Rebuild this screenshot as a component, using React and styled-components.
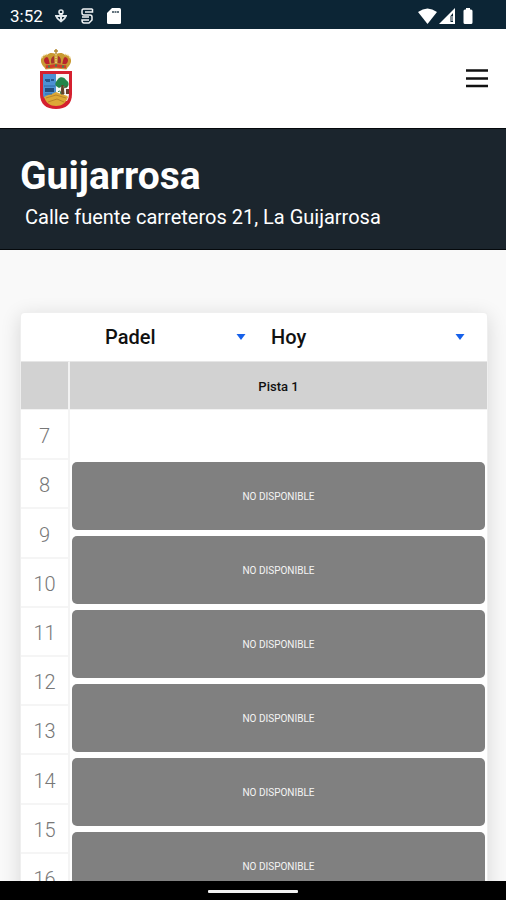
import React, { useState } from 'react';
import styled, { createGlobalStyle } from 'styled-components';

const GlobalStyle = createGlobalStyle`
  * {
    box-sizing: border-box;
  }

  body {
    margin: 0;
    background: #f9f9f9;
    font-family: Roboto, 'Liberation Sans', sans-serif;
    color: #111;
  }
`;

const Screen = styled.div`
  height: 100vh;
  display: flex;
  flex-direction: column;
  overflow: hidden;
`;

const StatusBar = styled.div`
  flex: none;
  height: 29px;
  padding: 2px 31px 0 10px;
  display: flex;
  align-items: center;
  justify-content: space-between;
  background: #0c2535;
  color: #fff;
`;

const StatusGroup = styled.div`
  display: flex;
  align-items: center;
  gap: ${({ $gap }) => $gap}px;
`;

const Clock = styled.span`
  font-size: 17px;
  line-height: 20px;
`;

const Header = styled.header`
  flex: none;
  height: 99px;
  padding: 0 18px 0 39px;
  display: flex;
  align-items: center;
  justify-content: space-between;
  background: #fff;
`;

const LogoLink = styled.a`
  display: flex;
`;

const MenuButton = styled.button`
  padding: 0;
  border: 0;
  background: none;
  display: flex;
`;

const Hero = styled.section`
  flex: none;
  padding: 24px 20px 19px;
  background: #1b252d;
  border-top: 1px solid #05090c;
  border-bottom: 1px solid #05090c;
  color: #fff;
`;

const Title = styled.h1`
  margin: 0;
  font-size: 39px;
  line-height: 46px;
  font-weight: 700;
`;

const Address = styled.p`
  margin: 5px 0 0 5px;
  font-size: 20px;
  line-height: 26px;
`;

const Content = styled.main`
  flex: 1;
  min-height: 0;
  overflow-y: auto;
  scrollbar-width: none;
  padding: 62px 18px 0 20px;
`;

const Card = styled.div`
  background: #fff;
  border: 1px solid #efefef;
  border-radius: 4px;
  box-shadow: 0 4px 20px rgba(0, 0, 0, 0.14);
`;

const Filters = styled.div`
  height: 48px;
  padding: 0 22px 0 84px;
  display: grid;
  grid-template-columns: 141fr 194fr;
  column-gap: 25px;
  align-items: center;
`;

const SelectBox = styled.div`
  display: grid;
  align-items: center;

  > * {
    grid-area: 1 / 1;
  }

  svg {
    justify-self: end;
    pointer-events: none;
  }
`;

const Select = styled.select`
  width: 100%;
  padding: 0;
  border: 0;
  background: none;
  appearance: none;
  font-family: inherit;
  font-size: 20px;
  font-weight: 500;
  line-height: 24px;
  color: #111;
`;

const Schedule = styled.div`
  display: grid;
  grid-template-columns: 49px 1fr;
`;

const HeadCell = styled.div`
  height: 49px;
  padding-top: 2px;
  display: flex;
  align-items: center;
  justify-content: center;
  background: #d2d2d2;
  border-bottom: 1px solid #f2f2f2;
  border-top: 1px solid #e6e6e6;
  border-right: ${({ $divided }) => ($divided ? '2px solid #f2f2f2' : '0')};
  font-size: 13px;
  font-weight: 500;
`;

const Hours = styled.ul`
  margin: 0;
  padding: 1px 0 0;
  list-style: none;
  display: flex;
  flex-direction: column;
  border-right: 2px solid #f4f4f4;
`;

const Hour = styled.li`
  flex: 1;
  padding-top: 3px;
  display: flex;
  align-items: center;
  justify-content: center;
  border-bottom: 2px solid #f5f5f5;
  font-size: 20px;
  font-weight: 300;
  line-height: 24px;
  color: #777;
`;

const Court = styled.div`
  padding: 0 2px 3px;
  display: flex;
  flex-direction: column;
  gap: 6px;
`;

const FreeSlot = styled.div`
  height: 46px;
`;

const Slot = styled.button`
  height: 68px;
  padding: 0;
  border: 0;
  border-radius: 5px;
  background: #808080;
  color: #f4f4f4;
  font-family: inherit;
  font-size: 10px;
  text-transform: uppercase;
`;

const NavBar = styled.div`
  flex: none;
  height: 19px;
  padding-top: 2px;
  display: flex;
  align-items: center;
  justify-content: center;
  background: #000;
`;

const NavHandle = styled.div`
  width: 90px;
  height: 3px;
  border-radius: 1px;
  background: #f2f2f2;
`;

function Arrow() {
  return (
    <svg width="10" height="6" viewBox="0 0 10 6" aria-hidden="true">
      <path d="M0.5 0H9.5L5 6Z" fill="#1660ea" />
    </svg>
  );
}

function Crest() {
  return (
    <svg width="34" height="62" viewBox="0 0 34 62" aria-hidden="true">
      {/* crown */}
      <path d="M6 20C-1 14 2 7 8 7C11 4 14 5 17 6C20 5 23 4 26 7C32 7 35 14 28 20Z" fill="#c99a32" />
      <path d="M8 17C4 14 4 10 8 9C10 10 10 13 11 17Z M26 17C30 14 30 10 26 9C24 10 24 13 23 17Z" fill="#b8242b" />
      <path d="M13 17C11 13 12 9 15 8L15.500 17Z M21 17C23 13 22 9 19 8L18.500 17Z" fill="#a83230" />
      <path d="M17 1V7M15 3H19" stroke="#b58a35" strokeWidth="1.500" />
      <path d="M3 10C4 7 7 6 9 7M31 10C30 7 27 6 25 7M17 6V16" fill="none" stroke="#ecd18a" strokeWidth="1.500" strokeDasharray="1.500 1" />
      <path d="M6 17Q17 14 28 17L27.500 21Q17 19 6.500 21Z" fill="#d23a2c" stroke="#c79a37" />
      <path d="M9 18.500H11M16 17.500H18M23 18.500H25" stroke="#3d8654" strokeWidth="2" />
      {/* shield */}
      <path d="M1 23H33V46C33 56 27 61 17 61C7 61 1 56 1 46Z" fill="#d5202f" />
      <path d="M4 26H17V50H5Q4 48 4 46Z" fill="#4d91d3" />
      <path d="M17 26H30V46Q30 50 28 53H17Z" fill="#f6f7f4" />
      <path d="M5 49C9 47 11 46 13 46L17 44L22 46C25 47 28 47 29 49C27 55 23 58 17 58C11 58 7 55 5 49Z" fill="#dda936" />
      <path d="M7 50L17 47L27 50M9 54L18 51L25 54" fill="none" stroke="#b98428" />
      <path d="M6 32H8V33H10V32H11M12 32H15" stroke="#24578e" strokeWidth="2" />
      <path d="M6 40H15V44H6Z" fill="#234d7c" />
      <path d="M5 38H16M6 46H13" stroke="#2f6aa5" />
      <path d="M17 38C15 35 18 33 19 31C21 28 26 29 27 32C31 34 30 39 27 40L24 38L20 40Z" fill="#23854a" />
      <path d="M23 37L22 46H25L24 37M25 40L28 38" fill="#654228" stroke="#654228" />
      <path d="M27 41H30V46H27Z" fill="#693d2e" />
      <path d="M19 44Q21 41 22 46" fill="none" stroke="#37834c" />
    </svg>
  );
}

const hours = [7, 8, 9, 10, 11, 12, 13, 14, 15, 16];
const slots = ['8:00', '9:30', '11:00', '12:30', '14:00', '15:30'];

export default function App() {
  const [sport, setSport] = useState('Padel');
  const [day, setDay] = useState('Hoy');

  return (
    <Screen>
      <GlobalStyle />
      <StatusBar>
        <StatusGroup $gap={12}>
          <Clock>3:52</Clock>
          <svg width="12" height="16" viewBox="0 0 12 16" aria-hidden="true">
            <circle cx="6" cy="4" r="2" fill="none" stroke="#dfe6ea" strokeWidth="1.600" />
            <path d="M4.500 5H7.500V8H4.500Z" fill="#fff" />
            <path d="M1 8H11Q10 11 6 13.500Q2 11 1 8Z" fill="none" stroke="#dfe6ea" strokeWidth="1.800" />
            <path d="M6 6V13" stroke="#dfe6ea" strokeWidth="2" />
          </svg>
          <svg width="16" height="16" viewBox="0 0 14 16" aria-hidden="true">
            <path
              d="M12.500 1H3.500Q2 1 2 3V5Q2 7 4 7H10M5 4H12.500V1M2 9H9M10 7Q12 7 12 9V12L9 15H4Q2 15 2 12H9"
              fill="none"
              stroke="#f1f4f5"
              strokeWidth="1.500"
            />
          </svg>
          <svg width="14" height="16" viewBox="0 0 14 16" aria-hidden="true">
            <path d="M5 0H12.500Q14 0 14 1.500V14.500Q14 16 12.500 16H1.500Q0 16 0 14.500V5Z" fill="#fff" />
            <path d="M5 4H12" stroke="#64747e" strokeWidth="2" strokeDasharray="2 0.500" />
          </svg>
        </StatusGroup>
        <StatusGroup $gap={2}>
          <svg width="19" height="16" viewBox="0 0 19 16" aria-hidden="true">
            <path d="M0 4Q9.500 -3 19 4L9.500 16Z" fill="#fff" />
          </svg>
          <svg width="16" height="16" viewBox="0 0 16 16" aria-hidden="true">
            <path d="M16 0V16H0Z" fill="#fff" />
            <path d="M14 5V14H11.500V8Z" fill="#0c2535" />
            <path d="M13 8V13" stroke="#fff" />
          </svg>
          <svg width="18" height="16" viewBox="0 0 18 16" aria-hidden="true">
            <path d="M9 0H13V1.500H14Q15.500 1.500 15.500 3V14.500Q15.500 16 14 16H8Q6.500 16 6.500 14.500V3Q6.500 1.500 8 1.500H9Z" fill="#fff" />
          </svg>
        </StatusGroup>
      </StatusBar>

      <Header>
        <LogoLink href="#" aria-label="Guijarrosa">
          <Crest />
        </LogoLink>
        <MenuButton type="button" aria-label="Menú">
          <svg width="22" height="20" viewBox="0 0 22 20" aria-hidden="true">
            <path d="M0 1.500H22M0 9.500H22M0 17H22" stroke="#111" strokeWidth="2.500" />
          </svg>
        </MenuButton>
      </Header>

      <Hero>
        <Title>Guijarrosa</Title>
        <Address>Calle fuente carreteros 21, La Guijarrosa</Address>
      </Hero>

      <Content>
        <Card>
          <Filters>
            <SelectBox>
              <Select aria-label="Deporte" value={sport} onChange={(e) => setSport(e.target.value)}>
                <option>Padel</option>
              </Select>
              <Arrow />
            </SelectBox>
            <SelectBox>
              <Select aria-label="Día" value={day} onChange={(e) => setDay(e.target.value)}>
                <option>Hoy</option>
              </Select>
              <Arrow />
            </SelectBox>
          </Filters>
          <Schedule>
            <HeadCell $divided />
            <HeadCell>Pista 1</HeadCell>
            <Hours>
              {hours.map((hour) => (
                <Hour key={hour}>{hour}</Hour>
              ))}
            </Hours>
            <Court>
              <FreeSlot />
              {slots.map((slot) => (
                <Slot key={slot} type="button" disabled>
                  No disponible
                </Slot>
              ))}
            </Court>
          </Schedule>
        </Card>
      </Content>

      <NavBar>
        <NavHandle />
      </NavBar>
    </Screen>
  );
}
